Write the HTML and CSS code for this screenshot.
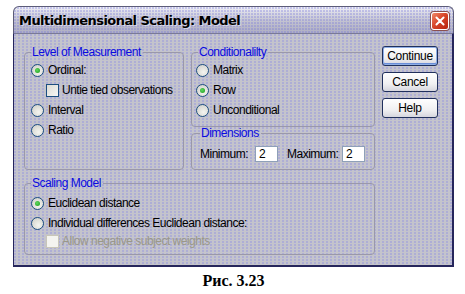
FILE: index.html
```html
<!DOCTYPE html>
<html>
<head>
<meta charset="utf-8">
<link rel="stylesheet" href="styles.css">
</head>
<body>
<div class="window">
  <div class="titlebar">
    <span class="title">Multidimensional Scaling: Model</span>
    <span class="close">
      <svg width="18" height="18" viewBox="0 0 18 18">
        <path d="M5 5 L13 13 M13 5 L5 13" stroke="#fff" stroke-width="2.2" stroke-linecap="round"/>
      </svg>
    </span>
  </div>
  <div class="client">
    <fieldset class="grp g-level">
      <legend>Level of Measurement</legend>
      <div class="opt"><span class="radio on"></span>Ordinal:</div>
      <div class="opt sub"><span class="check"></span>Untie tied observations</div>
      <div class="opt"><span class="radio"></span>Interval</div>
      <div class="opt"><span class="radio"></span>Ratio</div>
    </fieldset>
    <div class="midcol">
      <fieldset class="grp g-cond">
        <legend>Conditionalilty</legend>
        <div class="opt"><span class="radio"></span>Matrix</div>
        <div class="opt"><span class="radio on"></span>Row</div>
        <div class="opt"><span class="radio"></span>Unconditional</div>
      </fieldset>
      <fieldset class="grp g-dim">
        <legend>Dimensions</legend>
        <div class="dimrow">
          <span class="lbl">Minimum:</span><span class="field">2</span>
          <span class="lbl lbl2">Maximum:</span><span class="field">2</span>
        </div>
      </fieldset>
    </div>
    <div class="buttons">
      <div class="btn default">Continue</div>
      <div class="btn">Cancel</div>
      <div class="btn">Help</div>
    </div>
    <fieldset class="grp g-scale">
      <legend>Scaling Model</legend>
      <div class="opt"><span class="radio on"></span>Euclidean distance</div>
      <div class="opt"><span class="radio"></span>Individual differences Euclidean distance:</div>
      <div class="opt sub small disabled"><span class="check"></span>Allow negative subject weights</div>
    </fieldset>
  </div>
</div>
<div class="caption">Рис. 3.23</div>
</body>
</html>
```

FILE: styles.css
```css
body {
  margin: 0;
  background: #ffffff;
  font-family: "Liberation Sans", Arial, sans-serif;
  font-size: 12px;
  letter-spacing: -0.5px;
  color: #000;
}

.window {
  margin: 6px 0 0 13px;
  width: 441px;
}

.titlebar {
  box-sizing: border-box;
  height: 27px;
  border: 1px solid #5c5c78;
  border-bottom: none;
  border-radius: 6px 6px 0 0;
  background:
    radial-gradient(circle at 1px 1px, rgba(120,120,220,0.35) 0.7px, transparent 0.9px) 0 0 / 3px 3px,
    linear-gradient(#f2f2f8 0%, #dcdce6 20%, #c2c2d0 55%, #aeaec2 100%);
  display: flex;
  align-items: center;
  justify-content: space-between;
  padding: 0 4px 0 5px;
}

.title {
  font-family: "DejaVu Sans", sans-serif;
  font-weight: bold;
  font-size: 13px;
  letter-spacing: -0.55px;
  color: #000;
  text-shadow: 1px 1px 0 rgba(255,255,255,0.5);
}

.close {
  width: 18px;
  height: 18px;
  box-sizing: border-box;
  border: 1px solid #ffffff;
  border-radius: 3px;
  background: linear-gradient(135deg, #f08a6c 0%, #d8462a 45%, #b8240e 100%);
  box-shadow: 0 0 0 1px #8a5050;
  display: flex;
  align-items: center;
  justify-content: center;
  margin-top: 2px;
}
.close svg { width: 16px; height: 16px; }

.client {
  box-sizing: border-box;
  height: 234px;
  border-left: 1px solid #26265c;
  border-right: 2px solid #26265c;
  border-bottom: 2px solid #26265c;
  border-top: 1px solid #7a7a96;
  background:
    radial-gradient(circle at 1px 1px, rgba(110,110,240,0.55) 0.6px, transparent 0.8px) 0 0 / 4px 3px,
    #c4c4cc;
  padding: 12px 0 0 10px;
  display: grid;
  grid-template-columns: 160px 184px 56px;
  grid-template-rows: 124px 78px;
  column-gap: 7px;
  row-gap: 7px;
  align-items: start;
}

.grp {
  box-sizing: border-box;
  margin: 0;
  min-width: 0;
  border: 1px solid #9a98aa;
  border-radius: 4px;
  padding: 1px 0 0 6px;
}

.grp legend {
  color: #0a0ae0;
  line-height: 13px;
  padding: 0 2px 0 1px;
  margin-left: 0;
}

.g-level { height: 124px; }

.midcol {
  display: flex;
  flex-direction: column;
}
.g-cond { height: 81px; padding-left: 4px; }
.g-cond legend { margin-left: 2px; }
.g-dim { height: 43px; padding-left: 8px; padding-top: 6px; }

.g-scale {
  grid-column: 1 / 3;
  height: 78px;
  padding-top: 3px;
}

.opt {
  display: flex;
  align-items: center;
  height: 20px;
}
.opt.sub { padding-left: 15px; }
.opt.small { height: 16px; }
.opt.disabled { color: #9a9888; }

.radio {
  box-sizing: border-box;
  width: 13px;
  height: 13px;
  border-radius: 50%;
  border: 1px solid #1c4e80;
  background: radial-gradient(circle at 60% 65%, #f4f4f0 0%, #dcdcd6 60%, #c4c4c0 100%);
  margin-right: 4px;
  display: flex;
  align-items: center;
  justify-content: center;
  flex: none;
}
.radio.on::after {
  content: "";
  width: 5px;
  height: 5px;
  border-radius: 50%;
  background: radial-gradient(circle at 40% 40%, #5fd85f, #1a9a1a);
}

.check {
  box-sizing: border-box;
  width: 13px;
  height: 13px;
  border: 1px solid #1c4e80;
  background: linear-gradient(135deg, #dcdcd6, #f6f6f4);
  margin-right: 3px;
  flex: none;
}
.disabled .check {
  border-color: #c8c6b8;
  background: #f4f4f0;
}

.dimrow {
  display: flex;
  align-items: center;
  height: 16px;
}
.lbl { width: 55px; }
.lbl2 { margin-left: 9px; width: 55px; }
.field {
  box-sizing: border-box;
  width: 23px;
  height: 16px;
  background: #ffffff;
  border: 1px solid #8ea0b8;
  padding-left: 3px;
  line-height: 14px;
}

.buttons {
  display: flex;
  flex-direction: column;
  gap: 6px;
}
.btn {
  box-sizing: border-box;
  height: 20px;
  border: 1px solid #20305c;
  border-radius: 3px;
  background: linear-gradient(#fefefe 0%, #f0f0f2 60%, #d6d6de 100%);
  text-align: center;
  line-height: 18px;
  letter-spacing: -0.3px;
}
.btn.default {
  box-shadow: inset 0 0 0 1px #8eaee6, inset 0 -1px 0 1px #6a8ed8;
}

.caption {
  width: 441px;
  margin-left: 13px;
  text-align: center;
  font-family: "Liberation Serif", "Times New Roman", serif;
  font-weight: bold;
  font-size: 16px;
  letter-spacing: 0;
  line-height: 20px;
  margin-top: 4px;
}
```
